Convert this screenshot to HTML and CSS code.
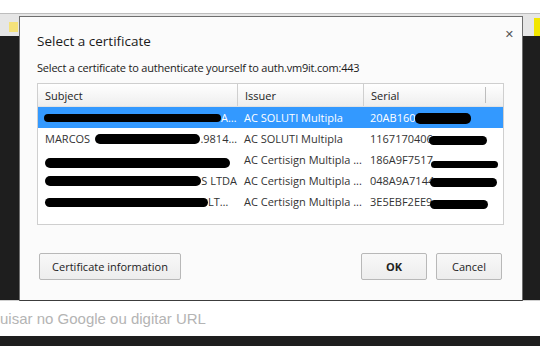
FILE: index.html
```html
<!DOCTYPE html>
<html lang="en">

<head>
    <meta charset="UTF-8">
    <title>Select a certificate</title>
    <link rel="stylesheet" href="styles.css">
</head>

<body>
    <div class="browser">
        <div class="tab-strip"></div>
        <div class="bookmark-bar">
            <span class="bookmark"></span>
            <span class="bookmark right"></span>
        </div>
        <div class="page-area"></div>
        <div class="omnibox">uisar no Google ou digitar URL</div>
        <div class="bottom-bar"></div>

        <div class="dialog">
            <div class="dialog-header">
                <h1>Select a certificate</h1>
                <span class="close">&#x2715;</span>
            </div>
            <p class="subtitle">Select a certificate to authenticate yourself to auth.vm9it.com:443</p>

            <div class="cert-table">
                <div class="row head">
                    <div class="cell subject">Subject</div>
                    <div class="cell issuer">Issuer</div>
                    <div class="cell serial">Serial<span class="col-end"></span></div>
                </div>
                <div class="row selected">
                    <div class="cell subject"><span class="redact r-s1"></span>A&hellip;</div>
                    <div class="cell issuer">AC SOLUTI Multipla</div>
                    <div class="cell serial">20AB160<span class="redact r-n1"></span></div>
                </div>
                <div class="row">
                    <div class="cell subject">MARCOS<span class="redact r-s2"></span>.9814&hellip;</div>
                    <div class="cell issuer">AC SOLUTI Multipla</div>
                    <div class="cell serial">1167170406<span class="redact r-n2"></span></div>
                </div>
                <div class="row">
                    <div class="cell subject"><span class="redact r-s3"></span></div>
                    <div class="cell issuer">AC Certisign Multipla ...</div>
                    <div class="cell serial">186A9F7517<span class="redact r-n3"></span></div>
                </div>
                <div class="row">
                    <div class="cell subject"><span class="redact r-s4"></span>S LTDA</div>
                    <div class="cell issuer">AC Certisign Multipla ...</div>
                    <div class="cell serial">048A9A7144<span class="redact r-n4"></span></div>
                </div>
                <div class="row">
                    <div class="cell subject"><span class="redact r-s5"></span>LT&hellip;</div>
                    <div class="cell issuer">AC Certisign Multipla ...</div>
                    <div class="cell serial">3E5EBF2EE9<span class="redact r-n5"></span></div>
                </div>
            </div>

            <div class="dialog-buttons">
                <button class="btn info">Certificate information</button>
                <div class="btn-group">
                    <button class="btn ok">OK</button>
                    <button class="btn">Cancel</button>
                </div>
            </div>
        </div>
    </div>
</body>

</html>
```

FILE: styles.css
```css
body {
    margin: 0;
    font-family: 'Open Sans', 'Noto Sans', sans-serif;
    background-color: #1e1e1e;
}

.browser {
    position: relative;
    width: 540px;
    height: 346px;
    overflow: hidden;
    display: flex;
    flex-direction: column;
}

.tab-strip {
    height: 13px;
    background-color: #ffffff;
    border-bottom: 1px solid #bdbdbd;
}

.bookmark-bar {
    height: 22px;
    background-color: #e6e6e6;
    display: flex;
    justify-content: space-between;
    padding: 8px 0 0 9px;
    box-sizing: border-box;
}

.bookmark {
    width: 9px;
    height: 10px;
    background-color: #f5e27a;
}

.bookmark.right {
    width: 6px;
    height: 18px;
    margin-top: -4px;
    background-color: #f2e600;
}

.page-area {
    flex: 1;
    background-color: #1e1e1e;
}

.omnibox {
    height: 35px;
    background-color: #ffffff;
    border-top: 1px solid #d0d0d0;
    color: #b4b4b4;
    font-family: 'Liberation Sans', Arial, sans-serif;
    font-size: 15px;
    line-height: 35px;
}

.bottom-bar {
    height: 10px;
    background-color: #1e1e1e;
}

.dialog {
    position: absolute;
    left: 19px;
    top: 16px;
    width: 504px;
    height: 285px;
    box-sizing: border-box;
    background-color: #fbfbfb;
    border: 1px solid #6e6e6e;
    border-bottom-color: #3c3c3c;
    padding: 14px 18px 0 17px;
    color: #222222;
}

.dialog-header {
    display: flex;
    justify-content: space-between;
    align-items: flex-start;
    height: 20px;
}

.dialog-header h1 {
    margin: 0;
    font-size: 13.5px;
    font-weight: normal;
    line-height: 20px;
    color: #1a1a1a;
}

.close {
    font-size: 11px;
    line-height: 11px;
    color: #555555;
    margin: -2px -10px 0 0;
    font-family: 'DejaVu Sans', sans-serif;
    font-weight: bold;
}

.subtitle {
    margin: 9px 0 0 0;
    font-size: 11px;
    letter-spacing: -0.2px;
    line-height: 15px;
    color: #1a1a1a;
}

.cert-table {
    margin-top: 8px;
    height: 140px;
    border: 1px solid #cfcfcf;
    background-color: #ffffff;
    font-size: 11px;
}

.row {
    display: flex;
    height: 21px;
    align-items: center;
    color: #333333;
}

.row.head {
    height: 22px;
    background: linear-gradient(#ffffff, #eeeeee);
    border-bottom: 1px solid #e2e2e2;
    color: #222222;
}

.row.selected {
    background-color: #3399ff;
    color: #ffffff;
}

.cell {
    box-sizing: border-box;
    padding-left: 7px;
    white-space: nowrap;
    display: flex;
    align-items: center;
    height: 100%;
}

.cell.subject {
    width: 199px;
}

.cell.issuer {
    width: 126px;
}

.cell.serial {
    flex: 1;
    position: relative;
}

.row.head .cell.issuer,
.row.head .cell.serial {
    border-left: 1px solid #cfcfcf;
}

.col-end {
    position: absolute;
    right: 17px;
    top: 3px;
    bottom: 3px;
    border-left: 1px solid #bdbdbd;
}

.redact {
    display: inline-block;
    height: 9px;
    background-color: #000000;
    border-radius: 5px;
    margin-top: 1px;
}

.r-s1 { width: 177px; margin-left: -1px; height: 8px; }
.r-s2 { width: 107px; height: 10px; margin-left: 5px; }
.r-s3 { width: 185px; height: 10px; margin-top: 6px; }
.r-s4 { width: 158px; height: 10px; }
.r-s5 { width: 163px; height: 9px; }
.r-n1 { width: 56px; height: 11px; margin-left: -1px; }
.r-n2 { width: 58px; height: 9px; margin-top: 4px; margin-left: -4px; }
.r-n3 { width: 67px; height: 7px; margin-top: 9px; margin-left: -2px; }
.r-n4 { width: 67px; height: 9px; margin-top: 3px; margin-left: -4px; }
.r-n5 { width: 58px; height: 9px; margin-top: 5px; margin-left: -2px; }

.dialog-buttons {
    display: flex;
    justify-content: space-between;
    margin-top: 28px;
    padding: 0 2px;
}

.btn-group {
    display: flex;
    gap: 9px;
}

.btn {
    height: 27px;
    min-width: 66px;
    padding: 0 10px;
    white-space: nowrap;
    font-family: inherit;
    font-size: 11px;
    color: #222222;
    background: linear-gradient(#f8f8f8, #ededed);
    border: 1px solid #b8b8b8;
    border-radius: 2px;
}

.btn.info {
    width: 142px;
}

.btn.ok {
    font-weight: bold;
}
```
